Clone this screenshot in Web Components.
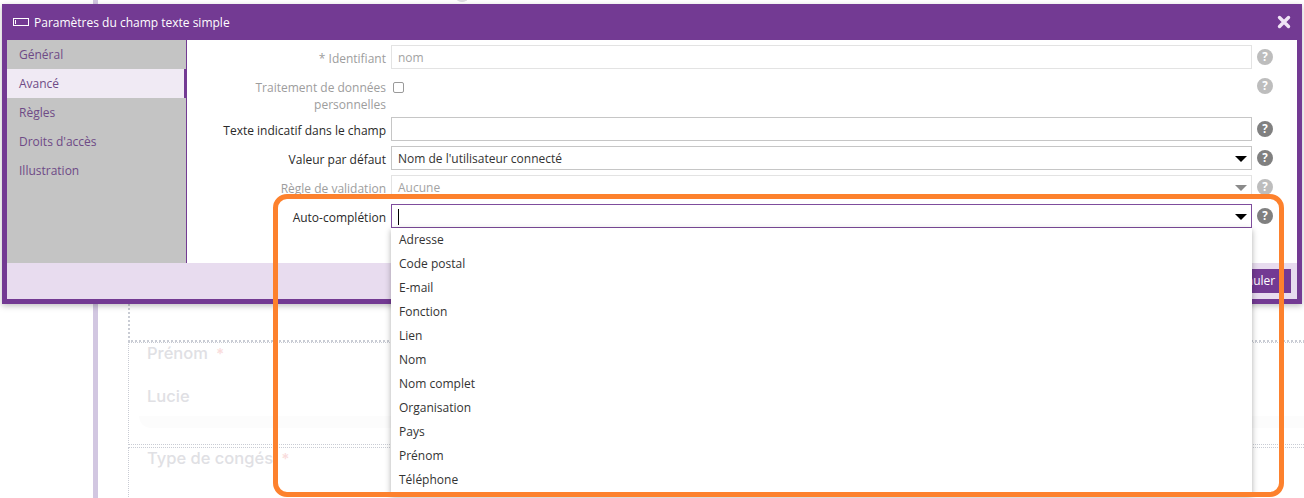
<!DOCTYPE html>
<html lang="fr"><head><meta charset="utf-8"><title>Paramètres</title>
<style>
html,body{margin:0;padding:0;height:498px;overflow:hidden;background:#fff;font-family:"Open Sans","Noto Sans",sans-serif}
</style></head><body>
<app-backdrop></app-backdrop>
<field-dialog heading="Paramètres du champ texte simple">
  <side-tab>Général</side-tab>
  <side-tab active>Avancé</side-tab>
  <side-tab>Règles</side-tab>
  <side-tab>Droits d'accès</side-tab>
  <side-tab>Illustration</side-tab>
  <form-row slot="form" label="* Identifiant" muted value="nom"></form-row>
  <form-row slot="form" label="Traitement de données personnelles" muted kind="check"></form-row>
  <form-row slot="form" label="Texte indicatif dans le champ"></form-row>
  <form-row slot="form" label="Valeur par défaut" kind="select" value="Nom de l'utilisateur connecté"></form-row>
  <form-row slot="form" label="Règle de validation" muted kind="select" value="Aucune"></form-row>
  <form-row slot="form" label="Auto-complétion" kind="select" focused></form-row>
</field-dialog>
<option-list>
  <span>Adresse</span><span>Code postal</span><span>E-mail</span><span>Fonction</span><span>Lien</span><span>Nom</span><span>Nom complet</span><span>Organisation</span><span>Pays</span><span>Prénom</span><span>Téléphone</span>
</option-list>
<orange-frame></orange-frame>
<script>
function def(name,html){
  customElements.define(name,class extends HTMLElement{
    connectedCallback(){
      if(this.shadowRoot)return;
      const r=this.attachShadow({mode:'open'});
      r.innerHTML=typeof html==='function'?html(this):html;
    }
  });
}
def('app-backdrop',`<style>
:host{display:block;position:absolute;inset:0;overflow:hidden;font-family:Inter,"Open Sans",sans-serif}
.rail{position:absolute;left:93px;top:0;bottom:0;width:5px;background:#d2c7e1}
.box{position:absolute;left:128px;right:-4px;border:1px dotted #c9ccd4;border-right:0;box-sizing:border-box;padding-left:18px;color:#e0e0e4;font-weight:500;font-size:16.5px}
.a{top:296px;height:46px;border-width:0 0 2px 2px;border-top:0;left:128px}
.b{top:342px;height:103px;border-top-width:1px}
.c{top:447px;height:60px;border-bottom:0}
.t{display:block;line-height:20px}
.v{display:block;margin-top:22px;line-height:20px}
.shade{position:absolute;left:10px;right:0;top:73px;height:12px;background:#fcfcfc;border-radius:0 0 0 22px}
i{font-style:normal;color:#f9dcdc;margin-left:4px;font-size:15px}
.mark{position:absolute;top:-3px;width:12px;height:5px;border:2px solid #dedee2;border-top:0;border-radius:0 0 7px 7px;box-sizing:border-box}
</style>
<div class="rail"></div>
<div class="mark" style="left:456px"></div>
<div class="box a"></div>
<div class="box b"><span class="t">Prénom <i>*</i></span><span class="v">Lucie</span><div class="shade"></div></div>
<div class="box c"><span class="t">Type de congés <i>*</i></span></div>`);
def('field-dialog',h=>`<style>
:host{display:flex;flex-direction:column;position:absolute;left:2px;top:4px;width:1300px;height:300px;box-sizing:border-box;background:#733a93;box-shadow:0 2px 6px rgba(0,0,0,.25);border:5px solid #733a93;border-top:0}
header{height:36px;flex:none;display:flex;align-items:center;color:#fff;font-size:12px;padding-left:6px;gap:5px}
header svg.x{margin-left:auto;margin-right:6px}
.mid{flex:1;display:flex;background:#fff;min-height:0}
nav{width:179px;flex:none;background:#c4c4c4;border-right:1px solid #733a93;display:flex;flex-direction:column}
.form{flex:1;display:flex;flex-direction:column;padding-top:5px;min-width:0}
footer{height:36px;flex:none;background:#e8dcef;display:flex;justify-content:flex-end;align-items:center;padding-right:6px}
button{all:unset;background:#733a93;color:#fff;font:12px "Open Sans",sans-serif;height:24px;line-height:24px;width:82px;padding-left:6px;text-align:center;box-sizing:border-box}
</style>
<header>
<svg width="16" height="8" viewBox="0 0 16 8"><rect x=".5" y=".5" width="15" height="7" fill="none" stroke="#fff"/><path d="M2.5 2v4" stroke="#fff"/></svg>
<span>${h.getAttribute('heading')}</span>
<svg class="x" width="14" height="14" viewBox="0 0 14 14"><path d="M2.5 2.5l9 9M11.5 2.5l-9 9" stroke="#efe3f5" stroke-width="3.4" stroke-linecap="round"/></svg>
</header>
<div class="mid"><nav><slot></slot></nav><div class="form"><slot name="form"></slot></div></div>
<footer><button>Annuler</button></footer>`);
def('side-tab',`<style>
:host{display:flex;align-items:center;height:29px;box-sizing:border-box;padding-left:12px;font-size:12px;color:#6e4a86}
:host([active]){background:#f0eaf4;border-right:2px solid #733a93}
</style><span><slot></slot></span>`);
def('form-row',h=>{
 const k=h.getAttribute('kind'),m=h.hasAttribute('muted'),f=h.hasAttribute('focused'),v=h.getAttribute('value')||'';
 const tall=k==='check';
 const ctl=tall
  ?`<div class="chk"></div>`
  :`<div class="inp">${f?'<b class="caret"></b>':''}<span>${v}</span>${k==='select'?'<svg class="ar" width="12" height="6" viewBox="0 0 12 6"><path d="M0 0h12L6 6z" fill="currentColor"/></svg>':''}</div>`;
 return `<style>
:host{display:flex;align-items:flex-start;height:${tall?'38px':'24px'};margin-bottom:5px;font-size:12px}
label{width:204px;flex:none;text-align:right;line-height:17px;padding:5px 5px 0 0;box-sizing:border-box;color:${m?'#9d9d9d':'#2a2a2a'}}
.inp{width:861px;height:24px;flex:none;box-sizing:border-box;border:1px solid ${f?'#7f4d9d':m?'#e3e3e3':'#c6c6c6'};display:flex;align-items:center;padding:1px 6px 0;position:relative;color:${m?'#a3a3a3':'#333'}}
.ar{position:absolute;right:4px;top:9px;color:${m?'#8a8a8a':'#000'}}
.caret{display:block;width:1px;height:16px;background:#000}
.chk{width:11px;height:11px;box-sizing:border-box;border:1px solid #9a9a9a;border-radius:2px;margin:8px 848px 0 2px;flex:none}
.help{margin:4px 0 0 5px;flex:none}
</style><label>${h.getAttribute('label')}</label>${ctl}
<svg class="help" width="16" height="16" viewBox="0 0 16 16"><circle cx="8" cy="8" r="8" fill="${m?'#bdbdbd':'#808080'}"/><text x="8" y="12" text-anchor="middle" fill="#fff" font-family="Open Sans" font-weight="700" font-size="11.5">?</text></svg>`;
});
def('option-list',`<style>
:host{display:flex;flex-direction:column;position:absolute;left:391px;top:228px;width:861px;height:267px;box-sizing:border-box;background:#fff;box-shadow:0 2px 6px rgba(0,0,0,.32);padding-left:8px;font-size:12px;color:#333}
::slotted(span){display:block;height:24px;line-height:24px}
</style><slot></slot>`);
def('orange-frame',`<style>
:host{display:block;position:absolute;left:273px;top:194px;width:1011px;height:303px;box-sizing:border-box;border:5px solid #fd812d;border-radius:14px;pointer-events:none}
</style>`);
</script>
</body></html>
